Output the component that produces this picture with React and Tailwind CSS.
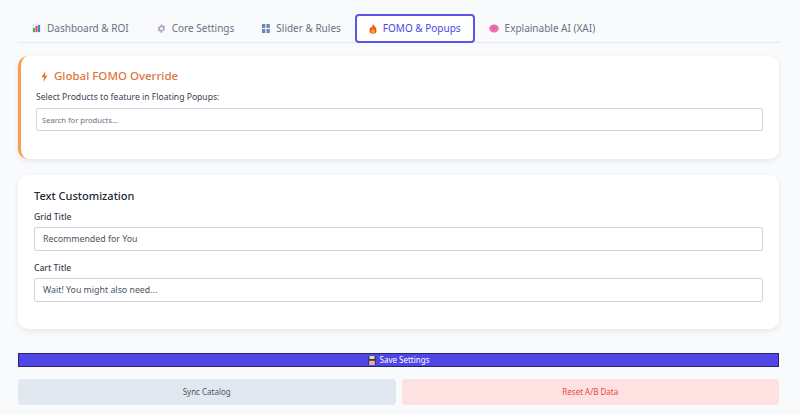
import React from "react";

const font = { fontFamily: '"Noto Sans", "Liberation Sans", sans-serif' };

// tiny emoji-like icons
function ChartIcon() {
  return (
    <svg width="9" height="9" viewBox="0 0 9 9">
      <rect x="0" y="0" width="9" height="9" rx="1" fill="#e8ecf2" />
      <rect x="1" y="4" width="2" height="4" fill="#4caf50" />
      <rect x="3.5" y="2" width="2" height="6" fill="#e5484d" />
      <rect x="6" y="1" width="2" height="7" fill="#3b82f6" />
    </svg>
  );
}

function GearIcon() {
  return (
    <svg width="9" height="9" viewBox="0 0 24 24" fill="#a8a3c4">
      <path d="M10 1h4l.6 3a8 8 0 0 1 2.2 1.3l2.9-1 2 3.4-2.3 2a8 8 0 0 1 0 2.6l2.3 2-2 3.4-2.9-1a8 8 0 0 1-2.2 1.3L14 23h-4l-.6-3a8 8 0 0 1-2.2-1.3l-2.9 1-2-3.4 2.3-2a8 8 0 0 1 0-2.6l-2.3-2 2-3.4 2.9 1A8 8 0 0 1 9.4 4L10 1zm2 7a4 4 0 1 0 0 8 4 4 0 0 0 0-8z" />
    </svg>
  );
}

function GridIcon() {
  return (
    <svg width="8" height="9" viewBox="0 0 8 9">
      <rect x="0" y="0" width="3.3" height="4" rx="0.5" fill="#7083b8" />
      <rect x="4.5" y="0" width="3.3" height="4" rx="0.5" fill="#7083b8" />
      <rect x="0" y="5" width="3.3" height="4" rx="0.5" fill="#7083b8" />
      <rect x="4.5" y="5" width="3.3" height="4" rx="0.5" fill="#7083b8" />
    </svg>
  );
}

function FireIcon() {
  return (
    <svg width="8" height="10" viewBox="0 0 8 10">
      <path d="M4 0C5 2 7.5 3.5 7.5 6.3A3.5 3.5 0 0 1 0.5 6.3C0.5 4.5 1.6 3.6 2.2 2.6 2.5 3.6 3 4 3.3 4 3.3 2.5 3.3 1.2 4 0z" fill="#f4511e" />
      <path d="M4 4.5C4.8 5.6 5.8 6.3 5.8 7.6A1.8 1.8 0 0 1 2.2 7.6C2.2 6.5 3.4 5.8 4 4.5z" fill="#ffb300" />
    </svg>
  );
}

function BrainIcon() {
  return (
    <svg width="10" height="9" viewBox="0 0 10 9">
      <ellipse cx="5" cy="4.5" rx="4.8" ry="4" fill="#f06fae" />
      <path d="M5 1.2v6.5M2.6 3.2c.8.3 1.2.9 1.1 1.7M7.4 3.2c-.8.3-1.2.9-1.1 1.7" stroke="#d94d94" strokeWidth="0.6" fill="none" />
    </svg>
  );
}

function BoltIcon() {
  return (
    <svg width="7" height="11" viewBox="0 0 7 11">
      <path d="M4.5 0L0.5 6.2h2.6L2.2 11 6.5 4.4H3.8L4.5 0z" fill="#ef6a2f" />
    </svg>
  );
}

function FloppyIcon() {
  return (
    <svg width="8" height="9" viewBox="0 0 8 9">
      <rect x="0" y="0" width="8" height="9" rx="0.8" fill="#3c3f4a" />
      <rect x="1.5" y="0" width="5" height="3" fill="#d9d9e3" />
      <rect x="1.2" y="4.8" width="5.6" height="4.2" fill="#f0a8b4" />
    </svg>
  );
}

const tabs = [
  { label: "Dashboard & ROI", icon: <ChartIcon /> },
  { label: "Core Settings", icon: <GearIcon /> },
  { label: "Slider & Rules", icon: <GridIcon /> },
  { label: "FOMO & Popups", icon: <FireIcon />, active: true },
  { label: "Explainable AI (XAI)", icon: <BrainIcon /> },
];

function Field({ label, value }) {
  return (
    <div>
      <div className="text-[8.6px] leading-[12px] font-medium text-[#374151]">{label}</div>
      <input
        type="text"
        defaultValue={value}
        className="mt-[4px] w-full h-[24px] px-[8px] border border-[#d1d5db] rounded-[2px] text-[8.8px] text-[#4b5563] bg-white outline-none"
      />
    </div>
  );
}

export default function App() {
  return (
    <div className="min-h-[415px] bg-[#f8fafc] pl-[18px] pr-[21px] pt-[14px]" style={font}>
      {/* tabs */}
      <div className="flex items-end border-b border-[#e6eaf0] mr-[-1px]">
        {tabs.map((t) => (
          <button
            key={t.label}
            className={
              "flex items-center gap-[6px] h-[29px] px-3 border-2 rounded-[4px] -mb-px text-[10px] " +
              (t.active
                ? "border-[#5b54e8] text-[#4f46e5] bg-white"
                : "border-transparent text-[#6b7280]")
            }
          >
            {t.icon}
            <span>{t.label}</span>
          </button>
        ))}
      </div>

      {/* FOMO override */}
      <div className="mt-[13px] bg-white rounded-[10px] border-l-[3px] border-[#f6a04d] pl-[15px] pr-4 pt-[12px] pb-[28px] shadow-[0_2px_6px_rgba(15,23,42,0.08)]">
        <div className="flex items-center gap-[6px] text-[11.5px] leading-[16px] font-medium text-[#e0763c]">
          <span className="pl-[5px]">
            <BoltIcon />
          </span>
          <span>Global FOMO Override</span>
        </div>
        <div className="mt-[7px] text-[8.6px] leading-[12px] text-[#374151]">
          Select Products to feature in Floating Popups:
        </div>
        <input
          type="text"
          placeholder="Search for products..."
          className="mt-[5px] w-full h-[23px] px-[5px] border border-[#d1d5db] rounded-[2px] text-[7.6px] placeholder:text-[#6b7280] outline-none"
        />
      </div>

      {/* text customization */}
      <div className="mt-4 bg-white rounded-[10px] px-4 pt-[13px] pb-[27px] shadow-[0_2px_6px_rgba(15,23,42,0.08)]">
        <div className="text-[11px] leading-[16px] font-medium text-[#1f2937]">Text Customization</div>
        <div className="mt-[7px]">
          <Field label="Grid Title" value="Recommended for You" />
        </div>
        <div className="mt-[11px]">
          <Field label="Cart Title" value="Wait! You might also need..." />
        </div>
      </div>

      <button className="mt-[24px] w-full h-[14px] flex items-center justify-center gap-[4px] bg-[#4f46e5] border border-[#29256b] text-white text-[8px] leading-none">
        <FloppyIcon />
        <span>Save Settings</span>
      </button>

      <div className="mt-[12px] grid grid-cols-2 gap-[6px]">
        <button className="h-[26px] rounded-[4px] bg-[#e2e8f0] text-[#4b5563] text-[8px]">Sync Catalog</button>
        <button className="h-[26px] rounded-[4px] bg-[#fee2e2] text-[#ef4444] text-[8px]">Reset A/B Data</button>
      </div>
    </div>
  );
}
